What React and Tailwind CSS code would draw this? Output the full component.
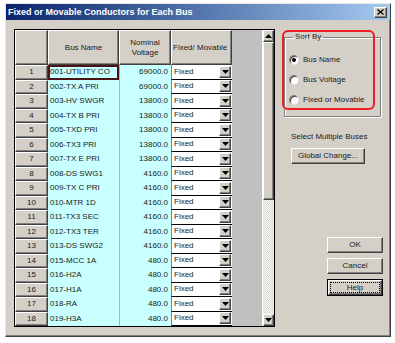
const rows = [
  ['001-UTILITY CO', '69000.0'],
  ['002-TX A PRI', '69000.0'],
  ['003-HV SWGR', '13800.0'],
  ['004-TX B PRI', '13800.0'],
  ['005-TXD PRI', '13800.0'],
  ['006-TX3 PRI', '13800.0'],
  ['007-TX E PRI', '13800.0'],
  ['008-DS SWG1', '4160.0'],
  ['009-TX C PRI', '4160.0'],
  ['010-MTR 1D', '4160.0'],
  ['011-TX3 SEC', '4160.0'],
  ['012-TX3 TER', '4160.0'],
  ['013-DS SWG2', '4160.0'],
  ['015-MCC 1A', '480.0'],
  ['016-H2A', '480.0'],
  ['017-H1A', '480.0'],
  ['018-RA', '480.0'],
  ['019-H3A', '480.0'],
];

const raised =
  'bg-[#d4d0c8] border border-t-white border-l-white border-r-[#404040] border-b-[#404040] shadow-[inset_-1px_-1px_0_#808080]';

function DownArrow() {
  return (
    <svg width="7" height="4" viewBox="0 0 7 4">
      <path d="M0 0h7L3.5 4z" fill="#000" />
    </svg>
  );
}

function Radio({ checked, label }) {
  return (
    <div className="h-[20px] flex items-center gap-[4px]">
      <div className="w-[10px] h-[10px] rounded-full bg-white border border-t-[#808080] border-l-[#808080] border-r-[#e0e0e0] border-b-[#e0e0e0] flex items-center justify-center shadow-[inset_1px_1px_0_#404040]">
        {checked && <div className="w-[4px] h-[4px] rounded-full bg-black" />}
      </div>
      <span>{label}</span>
    </div>
  );
}

export default function App() {
  return (
    <div className="w-[395px] h-[343px] bg-white pt-[3px] pl-[5px] font-['Liberation_Sans',Arial,sans-serif] text-[8px] leading-[10px] text-[#1a1a1a]">
      <div className="relative w-[386px] h-[334px] bg-[#d4d0c8] border border-t-[#e8e8e8] border-l-[#e8e8e8] border-r-[#404040] border-b-[#404040] shadow-[inset_-1px_-1px_0_#808080] flex flex-col">
        {/* title bar */}
        <div className="h-[16px] bg-linear-to-r from-[#0a246a] to-[#a6caf0] flex items-center justify-between pl-[2px] pr-[3px]">
          <span className="text-white font-bold text-[9px]">Fixed or Movable Conductors for Each Bus</span>
          <div className={`w-[13px] h-[11px] flex items-center justify-center ${raised}`}>
            <svg width="7" height="6" viewBox="0 0 7 6">
              <path d="M0.5 0.5l6 5M6.5 0.5l-6 5" stroke="#000" strokeWidth="1.4" />
            </svg>
          </div>
        </div>

        <div className="flex pl-[8px] pt-[9px]">
          {/* grid */}
          <div className="w-[261px] h-[298px] border border-black flex bg-[#c0c0c0]">
            <div className="w-[217px] flex flex-col overflow-hidden">
              <div className="h-[35px] flex shrink-0">
                <div className={`w-[33px] ${raised}`} />
                <div className={`w-[71px] flex items-center justify-center ${raised}`}>Bus Name</div>
                <div className={`w-[52px] flex items-center justify-center text-center ${raised}`}>
                  Nominal<br />Voltage
                </div>
                <div className={`w-[61px] flex items-center pl-[1px] ${raised}`}>Fixed/ Movable</div>
              </div>
              {rows.map(([name, kv], i) => (
                <div key={name} className="h-[14.5px] flex shrink-0">
                  <div className={`w-[33px] flex items-center justify-center ${raised}`}>{i + 1}</div>
                  <div
                    className={`w-[71px] bg-[#c8ffff] flex items-center ${
                      i === 0 ? 'border-2 border-[#4a1414]' : 'pl-[2px]'
                    }`}
                  >
                    {name}
                  </div>
                  <div className="w-[52px] bg-[#c8ffff] border-l border-[#a8b8b8] flex items-center justify-end pr-[3px]">
                    {kv}
                  </div>
                  <div className="w-[61px] bg-white border-l border-b border-l-[#808080] border-b-black flex items-center justify-between pl-[2px] pr-[1px]">
                    <span>Fixed</span>
                    <div className={`w-[12px] h-[12px] flex items-center justify-center ${raised}`}>
                      <DownArrow />
                    </div>
                  </div>
                </div>
              ))}
            </div>
            <div className="w-[30px] bg-[#c0c0c0]" />
            {/* scrollbar */}
            <div className="w-[12px] flex flex-col border-l border-white">
              <div className={`h-[12px] flex items-center justify-center ${raised}`}>
                <svg width="7" height="4" viewBox="0 0 7 4">
                  <path d="M0 4h7L3.5 0z" fill="#000" />
                </svg>
              </div>
              <div className={`h-[158px] ${raised}`} />
              <div className="flex-1 bg-[image:repeating-conic-gradient(#d4d0c8_0_25%,#ffffff_0_50%)] bg-size-[2px_2px]" />
              <div className={`h-[12px] flex items-center justify-center ${raised}`}>
                <DownArrow />
              </div>
            </div>
          </div>

          {/* right panel */}
          <div className="ml-[9px] w-[100px] flex flex-col pt-[3px]">
            <fieldset className="w-[97px] h-[85px] border border-[#808080] shadow-[inset_1px_1px_0_#fff,1px_1px_0_#fff] pl-[4px]">
              <legend className="ml-[4px] px-[2px]">Sort By</legend>
              <div className="pt-[8px] flex flex-col">
                <Radio checked label="Bus Name" />
                <Radio label="Bus Voltage" />
                <Radio label="Fixed or Movable" />
              </div>
            </fieldset>
            <div className="mt-[15px] ml-[7px] whitespace-nowrap">Select Multiple Buses</div>
            <div className={`mt-[6px] ml-[7px] w-[74px] h-[16px] flex items-center justify-center ${raised}`}>
              Global Change...
            </div>
            <div className="mt-[73px] ml-[43px] flex flex-col gap-[5px]">
              <div className={`w-[56px] h-[16px] flex items-center justify-center ${raised}`}>OK</div>
              <div className={`w-[56px] h-[16px] flex items-center justify-center ${raised}`}>Cancel</div>
              <div className="w-[56px] h-[17px] border border-black">
                <div className={`w-full h-full flex p-[1px] ${raised}`}>
                  <div className="flex-1 border border-dotted border-black flex items-center justify-center leading-[9px]">
                    Help
                  </div>
                </div>
              </div>
            </div>
          </div>
        </div>

        {/* red annotation around Sort By */}
        <div className="absolute left-[276px] top-[26px] w-[93px] h-[80px] border-2 border-[#ee1c24] rounded-[6px] pointer-events-none" />
      </div>
    </div>
  );
}
